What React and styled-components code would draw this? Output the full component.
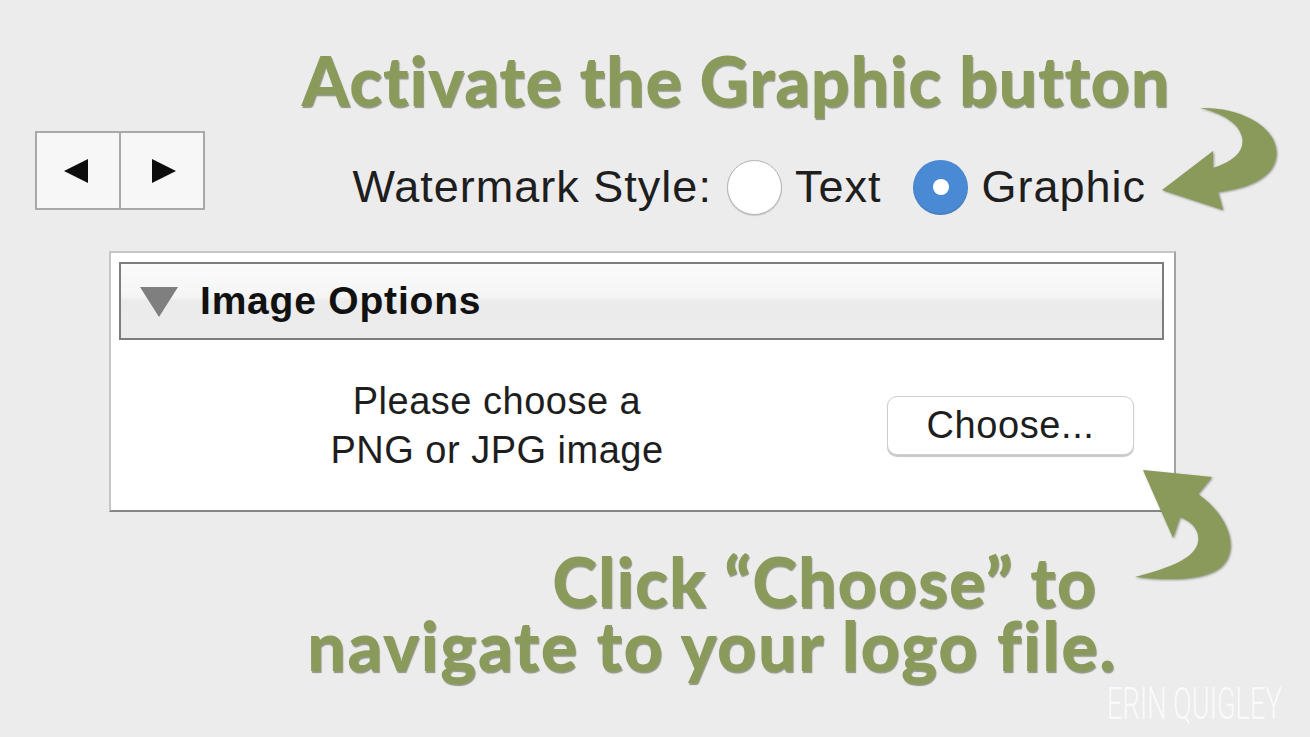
import React from 'react';
import styled, { createGlobalStyle } from 'styled-components';

const GlobalStyle = createGlobalStyle`
  html, body {
    margin: 0;
    padding: 0;
    background: #ececec;
  }
  * {
    box-sizing: border-box;
  }
`;

const GREEN = '#8a9a5b';

export default function App() {
  return (
    <Page>
      <GlobalStyle />
      <Headline>Activate the Graphic button</Headline>
      <TopRow>
        <NavGroup>
          <NavButton>
            <Tri $dir="left" />
          </NavButton>
          <NavButton>
            <Tri $dir="right" />
          </NavButton>
        </NavGroup>
        <StyleGroup>
          <Label>Watermark Style:</Label>
          <Radio />
          <Label $gap={32}>Text</Label>
          <Radio $checked />
          <Label $gap={0}>Graphic</Label>
        </StyleGroup>
      </TopRow>
      <Panel>
        <PanelHeader>
          <Disclosure />
          <PanelTitle>Image Options</PanelTitle>
        </PanelHeader>
        <PanelBody>
          <Hint>
            Please choose a
            <br />
            PNG or JPG image
          </Hint>
          <ChooseButton>Choose...</ChooseButton>
        </PanelBody>
      </Panel>
      <Caption>
        <CaptionLine $inset={213} $spacing={1}>Click “Choose” to</CaptionLine>
        <CaptionLine $inset={193} $spacing={1.6}>navigate to your logo file.</CaptionLine>
      </Caption>
      <Signature>
        <span>ERIN QUIGLEY</span>
      </Signature>

      <ArrowTop viewBox="0 0 140 125">
        <path d="M50,13 C95,12 130,35 126,62 C123,82 100,93 68,97 L73,115 L12,95 L63,56 L63,73 C85,66 95,55 92,42 C89,28 72,18 50,13 Z" />
      </ArrowTop>
      <ArrowBottom viewBox="0 0 130 135">
        <path d="M23,10 L92,17 L78,34 C108,55 120,88 102,106 C85,122 45,120 15,117 C50,108 75,98 78,82 C80,70 72,62 60,57 L53,78 Z" />
      </ArrowBottom>
    </Page>
  );
}

const Page = styled.div`
  position: relative;
  width: 1310px;
  height: 737px;
  overflow: hidden;
  background: #ececec;
  font-family: 'Liberation Sans', Arial, sans-serif;
  color: #1e1e1e;
`;

const Headline = styled.div`
  padding: 42px 140px 0 0;
  text-align: right;
  font-family: Lato, 'DejaVu Sans', sans-serif;
  font-weight: 900;
  font-size: 68px;
  line-height: 76px;
  letter-spacing: 0.8px;
  color: ${GREEN};
  text-shadow: 1px 2px 1px rgba(70, 80, 40, 0.55);
  white-space: nowrap;
`;

const TopRow = styled.div`
  display: flex;
  justify-content: space-between;
  align-items: flex-start;
  height: 79px;
  margin-top: 13px;
  padding: 0 164px 0 35px;
`;

const NavGroup = styled.div`
  display: flex;
  height: 79px;
  border: 2px solid #a9a9a9;
  background: #a9a9a9;
  gap: 2px;
`;

const NavButton = styled.div`
  width: 82px;
  height: 100%;
  background: #f7f7f7;
  display: flex;
  align-items: center;
  justify-content: center;
`;

const Tri = styled.span`
  width: 0;
  height: 0;
  border-top: 12px solid transparent;
  border-bottom: 12px solid transparent;
  ${(p) =>
    p.$dir === 'left'
      ? 'border-right: 24px solid #0d0d0d; margin-right: 4px;'
      : 'border-left: 24px solid #0d0d0d; margin-left: 4px;'}
`;

const StyleGroup = styled.div`
  display: flex;
  align-items: center;
  margin-top: 28px;
  height: 56px;
`;

const Label = styled.span`
  font-size: 45px;
  line-height: 56px;
  letter-spacing: 1px;
  color: #1e1e1e;
  margin-right: ${(p) => (p.$gap === undefined ? 15 : p.$gap)}px;
`;

const Radio = styled.span`
  width: 55px;
  height: 55px;
  border-radius: 50%;
  margin-right: 13px;
  flex-shrink: 0;
  position: relative;
  background: ${(p) => (p.$checked ? '#4a8ad5' : '#ffffff')};
  border: ${(p) => (p.$checked ? 'none' : '1.5px solid #b3b3b3')};
  box-shadow: ${(p) =>
    p.$checked ? 'inset 0 -1px 2px rgba(0,0,0,0.15)' : '0 1px 1px rgba(0,0,0,0.15)'};
  &::after {
    content: '';
    display: ${(p) => (p.$checked ? 'block' : 'none')};
    position: absolute;
    left: 50%;
    top: 50%;
    width: 16px;
    height: 16px;
    margin: -8px 0 0 -8px;
    border-radius: 50%;
    background: #ffffff;
  }
`;

const Panel = styled.div`
  margin: 41px 134px 0 109px;
  height: 261px;
  background: #ffffff;
  border: 2px solid #c6c6c6;
  border-right-color: #a3a3a3;
  border-bottom-color: #858585;
  padding: 9px 10px 0 8px;
  display: flex;
  flex-direction: column;
`;

const PanelHeader = styled.div`
  height: 78px;
  border: 2px solid #7d7d7d;
  background: linear-gradient(#fbfbfb 0%, #f5f5f5 44%, #ebebeb 50%, #ececec 100%);
  display: flex;
  align-items: center;
  padding-left: 19px;
`;

const Disclosure = styled.span`
  width: 0;
  height: 0;
  border-left: 19px solid transparent;
  border-right: 19px solid transparent;
  border-top: 30px solid #7f7f7f;
  margin-right: 22px;
  margin-top: 2px;
`;

const PanelTitle = styled.span`
  font-weight: bold;
  font-size: 39px;
  letter-spacing: 0.8px;
  color: #111111;
`;

const PanelBody = styled.div`
  flex: 1;
  display: flex;
  align-items: center;
  margin-left: -8px;
  padding-right: 30px;
`;

const Hint = styled.div`
  width: 772px;
  text-align: center;
  font-size: 38px;
  line-height: 49px;
  letter-spacing: 0.5px;
  color: #1e1e1e;
  padding-top: 2px;
`;

const ChooseButton = styled.button`
  margin-left: auto;
  width: 247px;
  height: 59px;
  border-radius: 10px;
  border: 1.5px solid #cfcfcf;
  background: #ffffff;
  box-shadow: 0 1.5px 1px rgba(0, 0, 0, 0.22);
  font-family: 'Liberation Sans', Arial, sans-serif;
  font-size: 38px;
  letter-spacing: 0.6px;
  color: #1e1e1e;
  padding: 0;
`;

const Caption = styled.div`
  margin-top: 37px;
  font-family: Lato, 'DejaVu Sans', sans-serif;
  font-weight: 900;
  font-size: 68px;
  line-height: 64px;
  color: ${GREEN};
  text-shadow: 1px 2px 1px rgba(70, 80, 40, 0.55);
`;

const CaptionLine = styled.div`
  text-align: right;
  white-space: nowrap;
  letter-spacing: ${(p) => p.$spacing}px;
  padding-right: ${(p) => p.$inset}px;
`;

const Signature = styled.div`
  margin-top: 5px;
  padding-right: 28px;
  text-align: right;
  font-family: Roboto, 'DejaVu Sans', sans-serif;
  font-weight: 300;
  font-size: 44px;
  line-height: 44px;
  color: #fafafa;
  span {
    display: inline-block;
    transform: scaleX(0.62);
    transform-origin: right center;
  }
`;

const ArrowTop = styled.svg`
  position: absolute;
  left: 1150px;
  top: 95px;
  width: 140px;
  height: 125px;
  fill: ${GREEN};
  filter: drop-shadow(1px 1px 1px rgba(50, 60, 30, 0.5));
`;

const ArrowBottom = styled.svg`
  position: absolute;
  left: 1120px;
  top: 460px;
  width: 130px;
  height: 135px;
  fill: ${GREEN};
  filter: drop-shadow(1px 1px 1px rgba(50, 60, 30, 0.5));
`;
